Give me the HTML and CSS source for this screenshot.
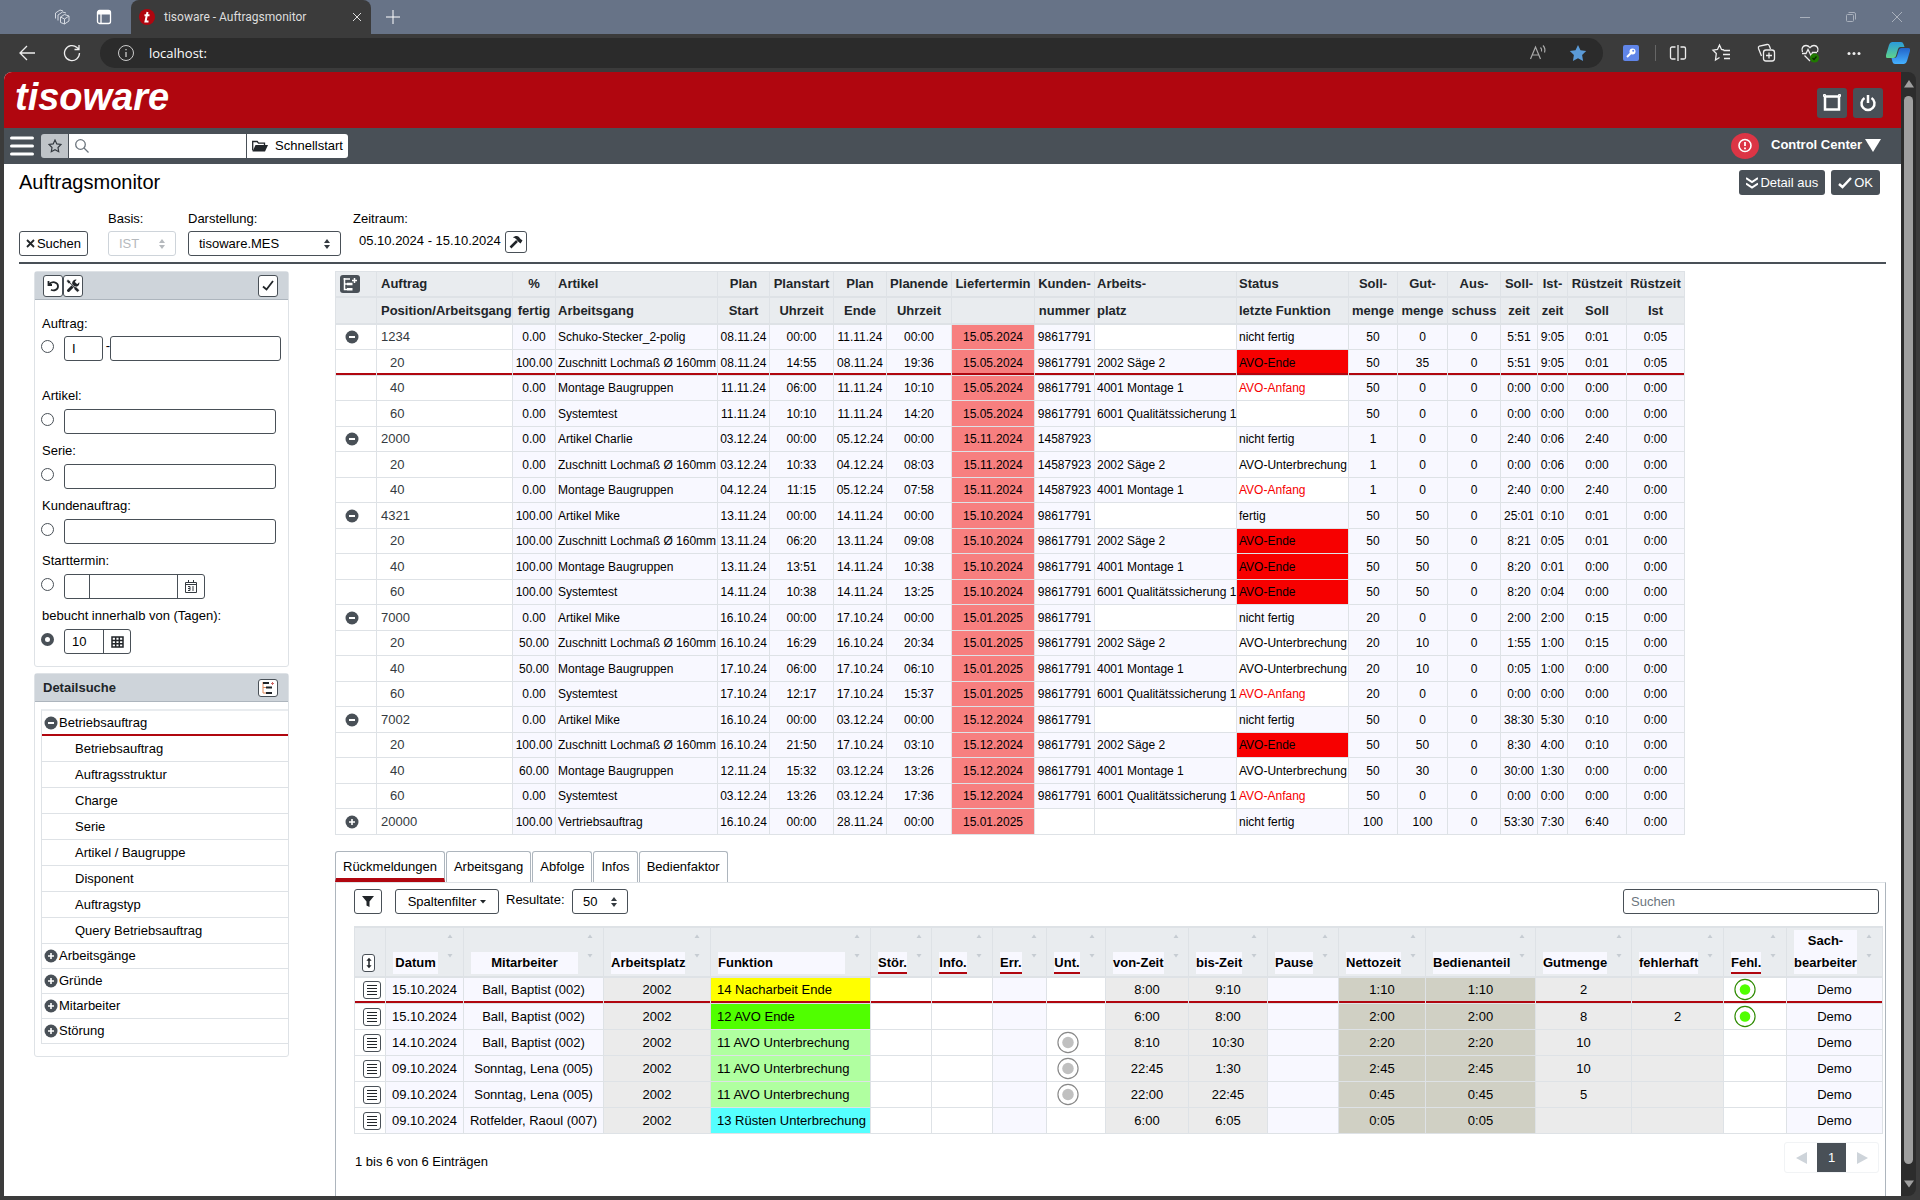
FILE: index.html
```html
<!DOCTYPE html>
<html lang="de">
<head>
<meta charset="utf-8">
<title>tisoware - Auftragsmonitor</title>
<link rel="stylesheet" href="styles.css">
</head>
<body>
<svg class="sprite" aria-hidden="true">
  <symbol id="minus" viewBox="0 0 14 14"><circle cx="7" cy="7" r="6.5" fill="#495057"/><path d="M4 7h6" stroke="#fff" stroke-width="2"/></symbol>
  <symbol id="plus" viewBox="0 0 14 14"><circle cx="7" cy="7" r="6.5" fill="#495057"/><path d="M4 7h6M7 4v6" stroke="#fff" stroke-width="1.6"/></symbol>
  <symbol id="updown" viewBox="0 0 8 12"><path d="M1 5l3-4 3 4zM1 7l3 4 3-4z" fill="currentColor"/></symbol>
  <symbol id="sort" viewBox="0 0 6 40"><path d="M.5 4L3 .5 5.500 4zM.5 20h5L3 23.500z" fill="#c6ccd2"/></symbol>
  <symbol id="list" viewBox="0 0 12 12"><path d="M1 1.500h10M1 4.500h10M1 7.500h10M1 10.500h10" stroke="#212529" stroke-width="1"/></symbol>
  <symbol id="lampgrey" viewBox="0 0 24 24"><circle cx="12" cy="12" r="10.5" fill="#fff" stroke="#888" stroke-width="1.2"/><circle cx="12" cy="12" r="6" fill="#c0c0c0"/></symbol>
  <symbol id="lampgreen" viewBox="0 0 24 24"><circle cx="12" cy="12" r="10.5" fill="#fff" stroke="#2e8b00" stroke-width="1.2"/><circle cx="12" cy="12" r="5.5" fill="#50ff00"/></symbol>
</svg>

<header class="tabstrip">
  <svg class="ti" viewBox="0 0 18 18" fill="none" stroke="#d5dae2"><path d="M7.500 9l4-2.500 4.500 1.500v5l-4.500 3-4-1.500zM11.500 11v5M7.500 9l4 2 4.500-3M5 12.500V7l4.500-3 3.500 1M2.500 10.500V5L7 2l3 1"/></svg>
  <svg class="ti" viewBox="0 0 18 18" fill="none" stroke="#fff" stroke-width="1.300"><rect x="2.500" y="2.500" width="13" height="13" rx="2"/><path d="M3 4.500h12" stroke-width="4"/><path d="M6 5v10"/></svg>
  <div class="tab">
    <svg width="16" height="16" viewBox="0 0 16 16"><circle cx="8" cy="8" r="8" fill="#b0060f"/><path d="M8.500 3L6.500 12.500h3M5.500 6.200h5" stroke="#fff" stroke-width="2" fill="none"/></svg>
    <span class="tab-title">tisoware - Auftragsmonitor</span>
    <svg width="12" height="12" viewBox="0 0 12 12" stroke="#ddd"><path d="M2 2l8 8M10 2l-8 8"/></svg>
  </div>
  <svg class="newtab" viewBox="0 0 14 14" stroke="#fff"><path d="M0 7h14M7 0v14"/></svg>
  <svg class="win first" viewBox="0 0 12 12" stroke="#a9b0bc" fill="none"><path d="M1 6.500h10"/></svg>
  <svg class="win" viewBox="0 0 12 12" stroke="#a9b0bc" fill="none"><rect x="1.500" y="3.500" width="7" height="7" rx="1"/><path d="M3.500 1.500h5.500a1.500 1.500 0 0 1 1.500 1.500v5.500"/></svg>
  <svg class="win" viewBox="0 0 12 12" stroke="#a9b0bc" fill="none"><path d="M1 1l10 10M11 1L1 11"/></svg>
</header>

<nav class="toolbar">
  <svg width="18" height="18" viewBox="0 0 18 18" fill="none" stroke="#eee" stroke-width="1.300"><path d="M17 9H2M9 2L2 9l7 7"/></svg>
  <svg class="reload" width="18" height="18" viewBox="0 0 18 18" fill="none" stroke="#eee" stroke-width="1.300"><path d="M16.500 9A7.500 7.500 0 1 1 14 3.500L16 5M16 1v4.500h-4.500"/></svg>
  <div class="address">
    <svg width="18" height="18" viewBox="0 0 18 18" fill="none" stroke="#ccc"><circle cx="9" cy="9" r="7.500"/><path d="M9 8v5M9 5v1.300" stroke-width="1.300"/></svg>
    <span class="url">localhost:</span>
    <svg width="18" height="18" viewBox="0 0 18 18" fill="none" stroke="#aaa" stroke-width="1.200"><path d="M1.500 15L6.500 3l5 12M3 11h7M11.500 3.500a4 4 0 0 1 1 4M14 1.500a7 7 0 0 1 1.500 7"/></svg>
    <svg class="star" width="18" height="18" viewBox="0 0 18 18" fill="#5b9bd8"><path d="M9 1l2.500 5.300 5.700.8-4.100 4 1 5.800L9 14.200 3.900 16.900l1-5.800-4.100-4 5.700-.8z"/></svg>
  </div>
  <svg class="key" width="16" height="16" viewBox="0 0 16 16"><rect width="16" height="16" rx="2" fill="#6085e8"/><circle cx="9.500" cy="6.500" r="3" fill="#fff"/><path d="M8 8l-4 4" stroke="#fff" stroke-width="2"/><circle cx="10.200" cy="5.800" r="1" fill="#6085e8"/></svg>
  <span class="divider"></span>
  <svg class="tb" viewBox="0 0 24 24" fill="none" stroke="#eee" stroke-width="1.300"><path d="M9.500 6H6a1.500 1.500 0 0 0-1.500 1.500v9A1.500 1.500 0 0 0 6 18h3.500M14.500 6H18a1.500 1.500 0 0 1 1.500 1.500v9A1.500 1.500 0 0 1 18 18h-3.500M12 4v16"/></svg>
  <svg class="tb" viewBox="0 0 24 24" fill="none" stroke="#eee" stroke-width="1.300"><path d="M14 9l-2.500-.5L9.500 4l-2 4.500-4.500.7 3.300 3.300-.8 6.500 4-2.500M13.500 9.500H20M13 13.500h7M14 17.500h6"/></svg>
  <svg class="tb" viewBox="0 0 24 24" fill="none" stroke="#eee" stroke-width="1.300"><rect x="9.500" y="9" width="11" height="11" rx="2.500"/><path d="M15 11.500v6M12 14.500h6M7.500 15l-3-7.500A2 2 0 0 1 5.500 5L13 3.500a2 2 0 0 1 2.300 1.300L16.500 8"/></svg>
  <svg class="tb" viewBox="0 0 24 24" fill="none" stroke="#eee" stroke-width="1.300"><path d="M4.500 11C3 7.500 5 4.500 8 4.500c2 0 3 1 4 2.200 1-1.200 2-2.200 4-2.200 3 0 5 3 3.500 6.500M4 12.500h4l2-4 3 6 1.500-3H19M6.500 14.500L12 20"/><circle cx="16.500" cy="17" r="4.500" fill="#1f7a00" stroke="none"/><path d="M14.500 17l1.500 1.500 2.500-3" stroke="#0b2b00"/></svg>
  <svg class="tb" viewBox="0 0 24 24" fill="#eee"><circle cx="7" cy="12.500" r="1.500"/><circle cx="12" cy="12.500" r="1.500"/><circle cx="17" cy="12.500" r="1.500"/></svg>
  <svg class="tb" viewBox="0 0 24 24">
    <defs><linearGradient id="c1" x1="0" y1="0" x2="0" y2="1"><stop offset="0" stop-color="#2a9bdc"/><stop offset="1" stop-color="#5fd38a"/></linearGradient><linearGradient id="c2" x1="0" y1="0" x2="0" y2="1"><stop offset="0" stop-color="#2263c9"/><stop offset="1" stop-color="#45b1ff"/></linearGradient></defs>
    <path d="M6 1h9a3 3 0 0 1 2.500 2l1 3h-4a3 3 0 0 0-2.500 2l-2 7a3 3 0 0 1-2.500 2H2a2 2 0 0 1-2-3L3 4a4 4 0 0 1 3-3z" fill="url(#c1)"/>
    <path d="M18 23H9a3 3 0 0 1-2.500-2l-1-4h3a3 3 0 0 0 2.500-2l2-6.500A3 3 0 0 1 15.500 7H22a2 2 0 0 1 2 3l-3 10a4 4 0 0 1-3 3z" fill="url(#c2)"/>
  </svg>
</nav>

<div class="viewport">
<div class="page">
  <div class="brand">
    <span class="logo">tisoware</span>
    <button class="sq" aria-label="Vollbild"><svg width="20" height="20" viewBox="0 0 20 20" fill="none" stroke="#fff"><path d="M3 3.500h14v13H3z" stroke-width="2.500"/><path d="M1.500 1.500h2v2h-2zM16.500 1.500h2v2h-2z" stroke-width="1"/></svg></button>
    <button class="sq" aria-label="Abmelden"><svg width="18" height="18" viewBox="0 0 18 18" fill="none" stroke="#fff" stroke-width="2.500"><path d="M5.500 4a6.500 6.500 0 1 0 7 0M9 1v8"/></svg></button>
  </div>

  <div class="menubar">
    <button class="burger" aria-label="Menü"><svg width="24" height="20" viewBox="0 0 24 20" stroke="#fff" stroke-width="3" stroke-linecap="round"><path d="M1.500 2h21M1.500 10h21M1.500 18h21"/></svg></button>
    <div class="quick">
      <button class="fav" aria-label="Favoriten"><svg width="14" height="14" viewBox="0 0 14 14" fill="none" stroke="#343a40" stroke-width="1.200"><path d="M7 1l1.800 3.900 4.200.6-3 3 .7 4.200L7 10.700l-3.700 2 .7-4.200-3-3 4.200-.6z"/></svg></button>
      <label class="seek"><svg width="14" height="14" viewBox="0 0 14 14" fill="none" stroke="#6c757d" stroke-width="1.300"><circle cx="5.500" cy="5.500" r="4.800"/><path d="M9 9l4.500 4.500"/></svg><input type="text" aria-label="Suche"></label>
      <button class="start"><svg width="16" height="12" viewBox="0 0 16 12"><path d="M.7 10.500V1.500h4.500l1.300 1.700h6V5" fill="none" stroke="#212529" stroke-width="1.300"/><path d="M3.500 5H16l-3 6.500H.5z" fill="#212529"/></svg>Schnellstart</button>
    </div>
    <button class="alert" aria-label="Hinweise"><svg width="28" height="26" viewBox="0 0 28 26"><ellipse cx="14" cy="13" rx="14" ry="13" fill="#dc3545"/><circle cx="14" cy="12.500" r="6" fill="none" stroke="#fff" stroke-width="1.600"/><path d="M14 9v4M14 14.500v1.700" stroke="#fff" stroke-width="1.800"/></svg></button>
    <button class="cc">Control Center <svg width="16" height="13" viewBox="0 0 16 13"><path d="M0 0h16L8 13z" fill="#fff"/></svg></button>
  </div>

  <div class="titlebar">
    <h1>Auftragsmonitor</h1>
    <button class="dark"><svg width="12" height="12" viewBox="0 0 12 12" fill="none" stroke="#fff" stroke-width="2"><path d="M0 1l6 4 6-4M0 6.500l6 4 6-4"/></svg>Detail aus</button>
    <button class="dark"><svg width="14" height="12" viewBox="0 0 14 12" fill="none" stroke="#fff" stroke-width="2.500"><path d="M1 7l3.500 3L13 1"/></svg>OK</button>
  </div>

  <div class="filters">
    <button class="btn search"><svg width="9" height="9" viewBox="0 0 9 9" stroke="#212529" stroke-width="1.800"><path d="M1 1l7 7M8 1L1 8"/></svg>Suchen</button>
    <div class="ff basis"><label for="basis">Basis:</label><span class="sel off"><select id="basis" disabled><option>IST</option></select><svg width="8" height="12"><use href="#updown"/></svg></span></div>
    <div class="ff darst"><label for="darst">Darstellung:</label><span class="sel"><select id="darst"><option>tisoware.MES</option></select><svg width="8" height="12"><use href="#updown"/></svg></span></div>
    <div class="ff"><span>Zeitraum:</span><span class="range">05.10.2024 - 15.10.2024 <button class="btn tool" aria-label="Zeitraum ändern"><svg width="14" height="14" viewBox="0 0 14 14"><path d="M1.500 12.500L8 6" stroke="#212529" stroke-width="2.500"/><path d="M4 2.500C6 .5 8.500.5 10 2l1 1.500 2.500 2-2 3-3-2.500C8 4.500 6.500 3 4 2.500z" fill="#212529"/></svg></button></span></div>
  </div>

  <div class="work">
    <aside class="side">
      <section class="card">
        <div class="card-head tools">
          <button class="btn mini" aria-label="Zurücksetzen"><svg width="12" height="12" viewBox="0 0 12 12" fill="none" stroke="#212529" stroke-width="1.800"><path d="M1.500 1v4H5M2 4.500c3-4 9-2.500 9 1.800 0 3.500-4 5-7 3.500"/></svg></button>
          <button class="btn mini" aria-label="Einstellungen"><svg width="14" height="14" viewBox="0 0 14 14"><path d="M2.500 11.500L9 5" stroke="#212529" stroke-width="3" stroke-linecap="round"/><path d="M13.200 3.200a3.600 3.600 0 1 1-2.500-2.500L9 2.500l.4 2.100 2.100.4z" fill="#212529"/><path d="M.5 2L2 .5l2.500 2v1.300L9 8l1-.3 3.500 3.500-2 2L8 10l.2-1L3.800 4.500H2.500z" fill="#212529" stroke="#fff" stroke-width=".5"/></svg></button>
          <button class="btn mini push" aria-label="Übernehmen"><svg width="12" height="12" viewBox="0 0 12 12" fill="none" stroke="#212529" stroke-width="1.800"><path d="M1 6.500l3.500 3L11 1"/></svg></button>
        </div>
        <form class="form">
          <div class="row first"><label for="r1">Auftrag:</label><div class="line"><input type="radio" name="k" id="r1"><input class="in w39" type="text" value="I" aria-label="Auftrag Typ"><span class="dash">-</span><input class="in w171" type="text" aria-label="Auftrag Nummer"></div></div>
          <div class="row"><label for="r2">Artikel:</label><div class="line"><input type="radio" name="k" id="r2"><input class="in wide" type="text" aria-label="Artikel"></div></div>
          <div class="row"><label for="r3">Serie:</label><div class="line"><input type="radio" name="k" id="r3"><input class="in wide" type="text" aria-label="Serie"></div></div>
          <div class="row"><label for="r4">Kundenauftrag:</label><div class="line"><input type="radio" name="k" id="r4"><input class="in wide" type="text" aria-label="Kundenauftrag"></div></div>
          <div class="row"><label for="r5">Starttermin:</label><div class="line"><input type="radio" name="k" id="r5"><span class="group"><input class="w26" type="text" aria-label="Operator"><input class="w88" type="text" aria-label="Datum"><button type="button" aria-label="Kalender"><svg width="12" height="13" viewBox="0 0 12 13" fill="none" stroke="#343a40"><path d="M.5 2.500h11v10H.5zM.5 4.500h11M3.500 0v3M8.500 0v3M3 6.500h2v4H3M3 8.500h2M8 6v5"/></svg></button></span></div></div>
          <div class="row"><label for="r6">bebucht innerhalb von (Tagen):</label><div class="line"><input type="radio" name="k" id="r6" checked><span class="group"><input class="w39" type="text" value="10" aria-label="Tage"><button type="button" aria-label="Auswahl"><svg width="13" height="12" viewBox="0 0 13 12" fill="none" stroke="#212529" stroke-width="1.500"><path d="M1 1h11v10H1zM1 4.500h11M1 7.700h11M4.700 1v10M8.300 1v10"/></svg></button></span></div></div>
        </form>
      </section>

      <section class="card">
        <div class="card-head">
          <h2>Detailsuche</h2>
          <button class="btn mini low push" aria-label="Baum umschalten"><svg width="14" height="14" viewBox="0 0 14 14" fill="none"><path d="M2 1v11h3M2 6.500h3" stroke="#e08a5a"/><path d="M2 2h6M5 6.500h6M5 12h6" stroke="#212529" stroke-width="2.200"/><path d="M11.500 1v3M10 2.500h3" stroke="#c66"/></svg></button>
        </div>
        <ul class="tree">
          <li class="top active"><svg><use href="#minus"/></svg>Betriebsauftrag</li>
          <li><a href="#">Betriebsauftrag</a></li>
          <li><a href="#">Auftragsstruktur</a></li>
          <li><a href="#">Charge</a></li>
          <li><a href="#">Serie</a></li>
          <li><a href="#">Artikel / Baugruppe</a></li>
          <li><a href="#">Disponent</a></li>
          <li><a href="#">Auftragstyp</a></li>
          <li><a href="#">Query Betriebsauftrag</a></li>
          <li class="top"><svg><use href="#plus"/></svg>Arbeitsgänge</li>
          <li class="top"><svg><use href="#plus"/></svg>Gründe</li>
          <li class="top"><svg><use href="#plus"/></svg>Mitarbeiter</li>
          <li class="top"><svg><use href="#plus"/></svg>Störung</li>
        </ul>
      </section>
    </aside>

    <main class="main">
      <table class="orders">
        <colgroup><col class="c41"><col class="c136"><col class="c43"><col class="c162"><col class="c52"><col class="c64"><col class="c53"><col class="c65"><col class="c83"><col class="c60"><col class="c142"><col class="c112"><col class="c49"><col class="c50"><col class="c53"><col class="c37"><col class="c30"><col class="c59"><col class="c58"></colgroup>
        <thead>
          <tr><th><button class="expand" aria-label="Alle auf- oder zuklappen"><svg width="16" height="14" viewBox="0 0 16 14" fill="none" stroke="#fff" stroke-width="1.500"><path d="M2.500 1v11.500H5M2.500 7H5M1.500 2h6.500"/><path d="M5 7h5.500M5 12.200h5.500" stroke-width="2.500"/><path d="M12.500 1v5M10 3.500h5"/></svg></button></th><th>Auftrag</th><th>%</th><th>Artikel</th><th>Plan</th><th>Planstart</th><th>Plan</th><th>Planende</th><th>Liefertermin</th><th>Kunden-</th><th>Arbeits-</th><th>Status</th><th>Soll-</th><th>Gut-</th><th>Aus-</th><th>Soll-</th><th>Ist-</th><th>Rüstzeit</th><th>Rüstzeit</th></tr>
          <tr><th></th><th>Position/Arbeitsgang</th><th>fertig</th><th>Arbeitsgang</th><th>Start</th><th>Uhrzeit</th><th>Ende</th><th>Uhrzeit</th><th></th><th>nummer</th><th>platz</th><th>letzte Funktion</th><th>menge</th><th>menge</th><th>schuss</th><th>zeit</th><th>zeit</th><th>Soll</th><th>Ist</th></tr>
        </thead>
        <tbody>
          <tr class="o"><td><svg><use href="#minus"/></svg></td><td>1234</td><td>0.00</td><td>Schuko-Stecker_2-polig</td><td>08.11.24</td><td>00:00</td><td>11.11.24</td><td>00:00</td><td>15.05.2024</td><td>98617791</td><td></td><td>nicht fertig</td><td>50</td><td>0</td><td>0</td><td>5:51</td><td>9:05</td><td>0:01</td><td>0:05</td></tr>
          <tr class="sel-row"><td></td><td>20</td><td>100.00</td><td>Zuschnitt Lochmaß Ø 160mm</td><td>08.11.24</td><td>14:55</td><td>08.11.24</td><td>19:36</td><td>15.05.2024</td><td>98617791</td><td>2002 Säge 2</td><td class="e">AVO-Ende</td><td>50</td><td>35</td><td>0</td><td>5:51</td><td>9:05</td><td>0:01</td><td>0:05</td></tr>
          <tr><td></td><td>40</td><td>0.00</td><td>Montage Baugruppen</td><td>11.11.24</td><td>06:00</td><td>11.11.24</td><td>10:10</td><td>15.05.2024</td><td>98617791</td><td>4001 Montage 1</td><td class="a">AVO-Anfang</td><td>50</td><td>0</td><td>0</td><td>0:00</td><td>0:00</td><td>0:00</td><td>0:00</td></tr>
          <tr><td></td><td>60</td><td>0.00</td><td>Systemtest</td><td>11.11.24</td><td>10:10</td><td>11.11.24</td><td>14:20</td><td>15.05.2024</td><td>98617791</td><td>6001 Qualitätssicherung 1</td><td></td><td>50</td><td>0</td><td>0</td><td>0:00</td><td>0:00</td><td>0:00</td><td>0:00</td></tr>
          <tr class="o"><td><svg><use href="#minus"/></svg></td><td>2000</td><td>0.00</td><td>Artikel Charlie</td><td>03.12.24</td><td>00:00</td><td>05.12.24</td><td>00:00</td><td>15.11.2024</td><td>14587923</td><td></td><td>nicht fertig</td><td>1</td><td>0</td><td>0</td><td>2:40</td><td>0:06</td><td>2:40</td><td>0:00</td></tr>
          <tr><td></td><td>20</td><td>0.00</td><td>Zuschnitt Lochmaß Ø 160mm</td><td>03.12.24</td><td>10:33</td><td>04.12.24</td><td>08:03</td><td>15.11.2024</td><td>14587923</td><td>2002 Säge 2</td><td>AVO-Unterbrechung</td><td>1</td><td>0</td><td>0</td><td>0:00</td><td>0:06</td><td>0:00</td><td>0:00</td></tr>
          <tr><td></td><td>40</td><td>0.00</td><td>Montage Baugruppen</td><td>04.12.24</td><td>11:15</td><td>05.12.24</td><td>07:58</td><td>15.11.2024</td><td>14587923</td><td>4001 Montage 1</td><td class="a">AVO-Anfang</td><td>1</td><td>0</td><td>0</td><td>2:40</td><td>0:00</td><td>2:40</td><td>0:00</td></tr>
          <tr class="o"><td><svg><use href="#minus"/></svg></td><td>4321</td><td>100.00</td><td>Artikel Mike</td><td>13.11.24</td><td>00:00</td><td>14.11.24</td><td>00:00</td><td>15.10.2024</td><td>98617791</td><td></td><td>fertig</td><td>50</td><td>50</td><td>0</td><td>25:01</td><td>0:10</td><td>0:01</td><td>0:00</td></tr>
          <tr><td></td><td>20</td><td>100.00</td><td>Zuschnitt Lochmaß Ø 160mm</td><td>13.11.24</td><td>06:20</td><td>13.11.24</td><td>09:08</td><td>15.10.2024</td><td>98617791</td><td>2002 Säge 2</td><td class="e">AVO-Ende</td><td>50</td><td>50</td><td>0</td><td>8:21</td><td>0:05</td><td>0:01</td><td>0:00</td></tr>
          <tr><td></td><td>40</td><td>100.00</td><td>Montage Baugruppen</td><td>13.11.24</td><td>13:51</td><td>14.11.24</td><td>10:38</td><td>15.10.2024</td><td>98617791</td><td>4001 Montage 1</td><td class="e">AVO-Ende</td><td>50</td><td>50</td><td>0</td><td>8:20</td><td>0:01</td><td>0:00</td><td>0:00</td></tr>
          <tr><td></td><td>60</td><td>100.00</td><td>Systemtest</td><td>14.11.24</td><td>10:38</td><td>14.11.24</td><td>13:25</td><td>15.10.2024</td><td>98617791</td><td>6001 Qualitätssicherung 1</td><td class="e">AVO-Ende</td><td>50</td><td>50</td><td>0</td><td>8:20</td><td>0:04</td><td>0:00</td><td>0:00</td></tr>
          <tr class="o"><td><svg><use href="#minus"/></svg></td><td>7000</td><td>0.00</td><td>Artikel Mike</td><td>16.10.24</td><td>00:00</td><td>17.10.24</td><td>00:00</td><td>15.01.2025</td><td>98617791</td><td></td><td>nicht fertig</td><td>20</td><td>0</td><td>0</td><td>2:00</td><td>2:00</td><td>0:15</td><td>0:00</td></tr>
          <tr><td></td><td>20</td><td>50.00</td><td>Zuschnitt Lochmaß Ø 160mm</td><td>16.10.24</td><td>16:29</td><td>16.10.24</td><td>20:34</td><td>15.01.2025</td><td>98617791</td><td>2002 Säge 2</td><td>AVO-Unterbrechung</td><td>20</td><td>10</td><td>0</td><td>1:55</td><td>1:00</td><td>0:15</td><td>0:00</td></tr>
          <tr><td></td><td>40</td><td>50.00</td><td>Montage Baugruppen</td><td>17.10.24</td><td>06:00</td><td>17.10.24</td><td>06:10</td><td>15.01.2025</td><td>98617791</td><td>4001 Montage 1</td><td>AVO-Unterbrechung</td><td>20</td><td>10</td><td>0</td><td>0:05</td><td>1:00</td><td>0:00</td><td>0:00</td></tr>
          <tr><td></td><td>60</td><td>0.00</td><td>Systemtest</td><td>17.10.24</td><td>12:17</td><td>17.10.24</td><td>15:37</td><td>15.01.2025</td><td>98617791</td><td>6001 Qualitätssicherung 1</td><td class="a">AVO-Anfang</td><td>20</td><td>0</td><td>0</td><td>0:00</td><td>0:00</td><td>0:00</td><td>0:00</td></tr>
          <tr class="o"><td><svg><use href="#minus"/></svg></td><td>7002</td><td>0.00</td><td>Artikel Mike</td><td>16.10.24</td><td>00:00</td><td>03.12.24</td><td>00:00</td><td>15.12.2024</td><td>98617791</td><td></td><td>nicht fertig</td><td>50</td><td>0</td><td>0</td><td>38:30</td><td>5:30</td><td>0:10</td><td>0:00</td></tr>
          <tr><td></td><td>20</td><td>100.00</td><td>Zuschnitt Lochmaß Ø 160mm</td><td>16.10.24</td><td>21:50</td><td>17.10.24</td><td>03:10</td><td>15.12.2024</td><td>98617791</td><td>2002 Säge 2</td><td class="e">AVO-Ende</td><td>50</td><td>50</td><td>0</td><td>8:30</td><td>4:00</td><td>0:10</td><td>0:00</td></tr>
          <tr><td></td><td>40</td><td>60.00</td><td>Montage Baugruppen</td><td>12.11.24</td><td>15:32</td><td>03.12.24</td><td>13:26</td><td>15.12.2024</td><td>98617791</td><td>4001 Montage 1</td><td>AVO-Unterbrechung</td><td>50</td><td>30</td><td>0</td><td>30:00</td><td>1:30</td><td>0:00</td><td>0:00</td></tr>
          <tr><td></td><td>60</td><td>0.00</td><td>Systemtest</td><td>03.12.24</td><td>13:26</td><td>03.12.24</td><td>17:36</td><td>15.12.2024</td><td>98617791</td><td>6001 Qualitätssicherung 1</td><td class="a">AVO-Anfang</td><td>50</td><td>0</td><td>0</td><td>0:00</td><td>0:00</td><td>0:00</td><td>0:00</td></tr>
          <tr class="o"><td><svg><use href="#plus"/></svg></td><td>20000</td><td>100.00</td><td>Vertriebsauftrag</td><td>16.10.24</td><td>00:00</td><td>28.11.24</td><td>00:00</td><td>15.01.2025</td><td></td><td></td><td>nicht fertig</td><td>100</td><td>100</td><td>0</td><td>53:30</td><td>7:30</td><td>6:40</td><td>0:00</td></tr>
        </tbody>
      </table>

      <div class="tabs">
        <button class="on">Rückmeldungen</button><button>Arbeitsgang</button><button>Abfolge</button><button>Infos</button><button>Bedienfaktor</button>
      </div>

      <section class="panel">
        <div class="bar">
          <button class="btn funnel" aria-label="Filter"><svg width="12" height="11" viewBox="0 0 12 11"><path d="M0 0h12L7.500 5.500V11l-3-1.500v-4z" fill="#212529"/></svg></button>
          <button class="btn cols">Spaltenfilter <svg width="6" height="4" viewBox="0 0 6 4"><path d="M0 0h6L3 3.500z" fill="#212529"/></svg></button>
          <label for="n">Resultate:</label>
          <span class="sel count"><select id="n"><option>50</option></select><svg width="8" height="12"><use href="#updown"/></svg></span>
          <input class="in find" type="text" placeholder="Suchen" aria-label="Suchen">
        </div>

        <table class="log">
          <colgroup><col class="c31"><col class="c78"><col class="c140"><col class="c107"><col class="c160"><col class="c61"><col class="c61"><col class="c54"><col class="c59"><col class="c83"><col class="c79"><col class="c71"><col class="c87"><col class="c110"><col class="c96"><col class="c92"><col class="c63"><col class="c96"></colgroup>
          <thead>
            <tr>
              <th><div class="h"><button class="btn tiny" aria-label="Zeilen aufklappen"><svg width="8" height="14" viewBox="0 0 8 14"><path d="M4 0l3.500 4h-2.500v6h2.500L4 14 .5 10H3V4H.5z" fill="#212529"/></svg></button></div></th>
              <th><div class="h"><span>Datum</span><svg><use href="#sort"/></svg></div></th>
              <th><div class="h"><span>Mitarbeiter</span><svg><use href="#sort"/></svg></div></th>
              <th><div class="h"><span>Arbeitsplatz</span><svg><use href="#sort"/></svg></div></th>
              <th><div class="h left"><span>Funktion</span><svg><use href="#sort"/></svg></div></th>
              <th><div class="h"><span><a href="#">Stör.</a></span><svg><use href="#sort"/></svg></div></th>
              <th><div class="h"><span><a href="#">Info.</a></span><svg><use href="#sort"/></svg></div></th>
              <th><div class="h"><span><a href="#">Err.</a></span><svg><use href="#sort"/></svg></div></th>
              <th><div class="h"><span><a href="#">Unt.</a></span><svg><use href="#sort"/></svg></div></th>
              <th><div class="h"><span>von-Zeit</span><svg><use href="#sort"/></svg></div></th>
              <th><div class="h"><span>bis-Zeit</span><svg><use href="#sort"/></svg></div></th>
              <th><div class="h"><span>Pause</span><svg><use href="#sort"/></svg></div></th>
              <th><div class="h"><span>Nettozeit</span><svg><use href="#sort"/></svg></div></th>
              <th><div class="h"><span>Bedienanteil</span><svg><use href="#sort"/></svg></div></th>
              <th><div class="h"><span>Gutmenge</span><svg><use href="#sort"/></svg></div></th>
              <th><div class="h"><span>fehlerhaft</span><svg><use href="#sort"/></svg></div></th>
              <th><div class="h"><span><a href="#">Fehl.</a></span><svg><use href="#sort"/></svg></div></th>
              <th><div class="h"><span>Sach-<br>bearbeiter</span><svg><use href="#sort"/></svg></div></th>
            </tr>
          </thead>
          <tbody>
            <tr class="sel-row"><td><button class="btn item" aria-label="Details"><svg><use href="#list"/></svg></button></td><td>15.10.2024</td><td>Ball, Baptist (002)</td><td>2002</td><td class="f14">14 Nacharbeit Ende</td><td></td><td></td><td></td><td></td><td>8:00</td><td>9:10</td><td></td><td>1:10</td><td>1:10</td><td>2</td><td></td><td><svg><use href="#lampgreen"/></svg></td><td>Demo</td></tr>
            <tr><td><button class="btn item" aria-label="Details"><svg><use href="#list"/></svg></button></td><td>15.10.2024</td><td>Ball, Baptist (002)</td><td>2002</td><td class="f12">12 AVO Ende</td><td></td><td></td><td></td><td></td><td>6:00</td><td>8:00</td><td></td><td>2:00</td><td>2:00</td><td>8</td><td>2</td><td><svg><use href="#lampgreen"/></svg></td><td>Demo</td></tr>
            <tr><td><button class="btn item" aria-label="Details"><svg><use href="#list"/></svg></button></td><td>14.10.2024</td><td>Ball, Baptist (002)</td><td>2002</td><td class="f11">11 AVO Unterbrechung</td><td></td><td></td><td></td><td><svg><use href="#lampgrey"/></svg></td><td>8:10</td><td>10:30</td><td></td><td>2:20</td><td>2:20</td><td>10</td><td></td><td></td><td>Demo</td></tr>
            <tr><td><button class="btn item" aria-label="Details"><svg><use href="#list"/></svg></button></td><td>09.10.2024</td><td>Sonntag, Lena (005)</td><td>2002</td><td class="f11">11 AVO Unterbrechung</td><td></td><td></td><td></td><td><svg><use href="#lampgrey"/></svg></td><td>22:45</td><td>1:30</td><td></td><td>2:45</td><td>2:45</td><td>10</td><td></td><td></td><td>Demo</td></tr>
            <tr><td><button class="btn item" aria-label="Details"><svg><use href="#list"/></svg></button></td><td>09.10.2024</td><td>Sonntag, Lena (005)</td><td>2002</td><td class="f11">11 AVO Unterbrechung</td><td></td><td></td><td></td><td><svg><use href="#lampgrey"/></svg></td><td>22:00</td><td>22:45</td><td></td><td>0:45</td><td>0:45</td><td>5</td><td></td><td></td><td>Demo</td></tr>
            <tr><td><button class="btn item" aria-label="Details"><svg><use href="#list"/></svg></button></td><td>09.10.2024</td><td>Rotfelder, Raoul (007)</td><td>2002</td><td class="f13">13 Rüsten Unterbrechung</td><td></td><td></td><td></td><td></td><td>6:00</td><td>6:05</td><td></td><td>0:05</td><td>0:05</td><td></td><td></td><td></td><td>Demo</td></tr>
          </tbody>
        </table>

        <div class="foot">
          <span>1 bis 6 von 6 Einträgen</span>
          <div class="pager"><button aria-label="Zurück"><svg width="11" height="12" viewBox="0 0 11 12"><path d="M11 0v12L0 6z" fill="#ced4da"/></svg></button><button class="cur">1</button><button aria-label="Weiter"><svg width="11" height="12" viewBox="0 0 11 12"><path d="M0 0v12l11-6z" fill="#ced4da"/></svg></button></div>
        </div>
      </section>
    </main>
  </div>
</div>
<div class="scroll"><svg width="10" height="8" viewBox="0 0 10 8"><path d="M5 0l5 7.500H0z" fill="#9f9f9f"/></svg><span class="thumb"></span><svg width="10" height="8" viewBox="0 0 10 8"><path d="M5 7.500L0 .5h10z" fill="#9f9f9f"/></svg></div>
</div>
</body>
</html>
```
FILE: styles.css
```css
* { box-sizing: border-box; }
body {
  margin: 0;
  height: 100vh;
  display: flex;
  flex-direction: column;
  overflow: hidden;
  background: #3b3b3b;
  color: #000;
  font: 13px/20px "Liberation Sans", Arial, sans-serif;
}
button, input, select { font: inherit; color: inherit; margin: 0; padding: 0; }
button { display: inline-flex; align-items: center; justify-content: center; border: 0; background: none; white-space: nowrap; }
svg { flex: none; display: block; }
.sprite { display: none; }

/* browser frame */
.tabstrip { display: flex; align-items: center; height: 34px; background: #677387; padding: 0 17px 0 53px; }
.ti { width: 18px; height: 18px; margin-right: 24px; }
.ti + .ti { margin-right: 18px; }
.tab {
  display: flex; align-items: center; align-self: stretch; width: 240px; padding: 0 8px;
  background: #3b3b3b; border-radius: 8px 8px 0 0; color: #ddd; font: 12px/16px Roboto, sans-serif;
}
.tab-title { flex: 1; margin-left: 9px; white-space: nowrap; }
.newtab { width: 14px; height: 14px; margin-left: 15px; }
.win { width: 12px; height: 12px; margin-left: 34px; }
.win.first { margin-left: auto; }
.toolbar { display: flex; align-items: center; height: 38px; padding: 0 10px 0 18px; }
.reload { margin-left: 27px; }
.address {
  flex: 1; display: flex; align-items: center; height: 30px; margin: 0 20px 0 19px; padding: 0 16px 0 17px;
  border-radius: 15px; background: #2b2b2b;
}
.url { flex: 1; margin-left: 14px; color: #fff; font: 13px/18px "Open Sans", sans-serif; }
.star { margin-left: 22px; }
.divider { width: 1px; height: 16px; margin: 0 10px 0 16px; background: #666; }
.tb { width: 24px; height: 24px; margin-right: 20px; }
.tb:last-child { margin-right: 0; }
.viewport { flex: 1; min-height: 0; display: flex; padding: 0 4px 4px; }
.scroll {
  width: 15px; display: flex; flex-direction: column; align-items: center; gap: 8px; padding: 8px 0;
  background: #2c2c2c; border-radius: 0 8px 8px 0;
}
.thumb { flex: 1; width: 9px; margin-bottom: 8px; border-radius: 5px; background: #9f9f9f; }

/* application header */
.page { flex: 1; min-width: 0; display: flex; flex-direction: column; overflow: hidden; background: #fff; border-radius: 8px 0 0 0; }
.brand { flex: none; display: flex; align-items: center; gap: 6px; height: 56px; padding: 5px 18px 0 11px; background: #b0060f; }
.logo { flex: 1; color: #fff; font: italic bold 38px/44px "Liberation Sans", Arial, sans-serif; margin-top: -12px; }
.sq { width: 30px; height: 30px; border-radius: 3px; background: #495057; }
.menubar { flex: none; display: flex; align-items: center; height: 36px; padding: 0 20px 0 6px; background: #495057; }
.quick { display: flex; height: 24px; margin-left: 7px; border-radius: 3px; overflow: hidden; }
.fav { width: 28px; background: #bfc4c8; border-right: 1px solid #495057; }
.seek { display: flex; align-items: center; width: 177px; padding-left: 6px; background: #fff; }
.seek input { flex: 1; min-width: 0; border: 0; outline: 0; }
.start { gap: 7px; width: 102px; border-left: 1px solid #495057; background: #fff; }
.alert { margin-left: auto; }
.cc { gap: 3px; margin-left: 12px; padding-bottom: 2px; color: #fff; font-weight: bold; }

.titlebar { flex: none; display: flex; align-items: center; gap: 6px; height: 37px; padding: 0 21px 0 15px; }
h1 { flex: 1; margin: 0; padding-bottom: 2px; font-size: 20px; font-weight: normal; line-height: 24px; }
.dark { height: 25px; gap: 2px; padding: 0 7px; border-radius: 3px; background: #495057; color: #fff; }

.filters { flex: none; display: flex; align-items: flex-end; height: 63px; margin: 0 15px; padding-bottom: 6px; border-bottom: 2px solid #495057; }
.btn { height: 25px; border: 1px solid #495057; border-radius: 3px; background: #fff; }
.search { gap: 2px; width: 69px; }
.ff { display: flex; flex-direction: column; gap: 2px; margin-left: 12px; }
.basis { width: 68px; margin-left: 20px; }
.darst { width: 153px; }
.sel { display: grid; align-items: center; height: 25px; }
.sel select { grid-area: 1 / 1; width: 100%; height: 25px; padding: 0 10px; border: 1px solid #495057; border-radius: 3px; background: #fff; appearance: none; opacity: 1; }
.sel svg { grid-area: 1 / 1; justify-self: end; margin-right: 10px; pointer-events: none; color: #343a40; }
.sel.off select { color: #b5b9bd; border-color: #ced4da; }
.sel.off svg { color: #b5b9bd; }
.range { display: flex; gap: 4px; height: 25px; margin-left: 6px; }
.tool { width: 22px; height: 22px; }

/* side column */
.work { flex: 1; min-height: 0; display: flex; gap: 46px; padding: 7px 15px 0 30px; }
.side { width: 255px; display: flex; flex-direction: column; gap: 6px; flex: none; }
.card { border: 1px solid #dee2e6; border-radius: 3px; }
.card-head { display: flex; align-items: center; height: 28px; padding: 0 10px 0 8px; background: #ced4da; border-bottom: 1px solid #adb5bd; }
h2 { margin: 0; color: #212529; font-size: 13px; line-height: 20px; }
.mini { width: 20px; height: 22px; }
.low { height: 18px; }
.push { margin-left: auto; }
.form { padding: 14px 7px 12px 6px; display: flex; flex-direction: column; gap: 7px; }
.row { display: flex; flex-direction: column; gap: 3px; }
.row.first { gap: 2px; margin-bottom: 18px; }
.row label { margin-left: 1px; }
.line { display: flex; height: 25px; }
.line input[type="radio"] { appearance: none; flex: none; width: 13px; height: 13px; margin: 4px 10px 0 0; border: 1px solid #495057; border-radius: 50%; background: #fff; }
.line input[type="radio"]:checked { border-width: 4px; }
.in { height: 25px; padding: 0 7px; border: 1px solid #495057; border-radius: 3px; background: #fff; }
.w39 { width: 39px; }
.w171 { width: 171px; }
.wide { width: 212px; }
.w26 { width: 25px; }
.w88 { width: 88px; }
.dash { width: 7px; text-align: right; }
.group { display: flex; height: 25px; border: 1px solid #495057; border-radius: 3px; }
.group input { border: 0; border-right: 1px solid #495057; padding-left: 7px; background: none; }
.group button { width: 26px; }
.tree { list-style: none; margin: 7px 0 12px 6px; padding: 0; border: 1px solid #dee2e6; border-width: 2px 0 0 1px; border-top-color: #e9ecef; }
.tree li { display: flex; align-items: center; height: 26px; padding-left: 33px; border-bottom: 1px solid #dee2e6; }
.tree a { color: inherit; text-decoration: none; }
.tree .top { height: 25px; gap: 1px; padding-left: 2px; }
.tree svg { width: 14px; height: 14px; }
.tree .active { border-bottom: 2px solid #b0060f; }

/* tables */
.main { flex: 1; min-width: 0; display: flex; flex-direction: column; }
table { table-layout: fixed; border-collapse: separate; border-spacing: 0; border-left: 1px solid #dee2e6; }
th, td { border: solid #dee2e6; border-width: 0 1px 1px 0; white-space: nowrap; }
.c30 { width: 30px; } .c31 { width: 31px; } .c37 { width: 37px; } .c41 { width: 41px; } .c43 { width: 43px; }
.c49 { width: 49px; } .c50 { width: 50px; } .c52 { width: 52px; } .c53 { width: 53px; } .c54 { width: 54px; }
.c58 { width: 58px; } .c59 { width: 59px; } .c60 { width: 60px; } .c61 { width: 61px; } .c63 { width: 63px; }
.c64 { width: 64px; } .c65 { width: 65px; } .c71 { width: 71px; } .c78 { width: 78px; } .c79 { width: 79px; }
.c83 { width: 83px; } .c87 { width: 87px; } .c92 { width: 92px; } .c96 { width: 96px; } .c107 { width: 107px; }
.c110 { width: 110px; } .c112 { width: 112px; } .c136 { width: 136px; } .c140 { width: 140px; } .c142 { width: 142px; }
.c160 { width: 160px; } .c162 { width: 162px; }
.sel-row td { box-shadow: inset 0 -2px #b0060f; }

.orders { width: 1350px; border-top: 1px solid #dee2e6; text-align: center; }
.orders th { height: 26px; padding: 0 1px; border-bottom-width: 2px; background: #e9ecef; color: #212529; line-height: 20px; }
.orders thead tr + tr th { height: 27px; }
.orders td { height: 25px; padding: 0 1px; background: #f8f8ff; font-size: 12px; line-height: 20px; }
.orders tbody tr:nth-child(even) td { height: 26px; }
.orders th:nth-child(2), .orders td:nth-child(2),
.orders th:nth-child(4), .orders td:nth-child(4),
.orders th:nth-child(11), .orders td:nth-child(11),
.orders th:nth-child(12), .orders td:nth-child(12) { text-align: left; padding: 0 0 0 2px; }
.orders td:nth-child(1) { background: #fff; }
.orders td:nth-child(2) { background: #fff; color: #343a40; font-size: 13px; padding-left: 13px; }
.orders th:nth-child(2), .orders .o td:nth-child(2) { padding-left: 4px; }
.orders td:nth-child(9) { background: #f77f7f; }
.orders td:nth-child(12) { background: #fff; }
.orders .o td:nth-child(12) { background: #f8f8ff; }
.orders td:empty { background: #fff; }
.orders td.e { background: #f70000; }
.orders td.a { color: #f70000; }
.orders td svg { width: 14px; height: 14px; margin-left: 8px; }
.orders .expand { display: flex; width: 20px; height: 18px; margin-left: 3px; border-radius: 3px; background: #495057; }

.tabs { display: flex; gap: 1px; margin-top: 16px; }
.tabs button { height: 31px; padding: 0 7px; border: 1px solid #adb5bd; border-bottom: 0; border-radius: 3px 3px 0 0; background: #fff; }
.tabs .on { border-bottom: 4px solid #b0060f; padding-top: 3px; }
.panel { flex: 1; border: 1px solid #adb5bd; border-top-color: #dee2e6; border-bottom: 0; padding: 6px 2px 0 18px; }
.bar { display: flex; margin-right: 4px; }
.funnel { width: 28px; }
.cols { width: 104px; margin: 0 7px 0 13px; gap: 4px; }
.bar label { line-height: 22px; width: 66px; }
.count { width: 56px; }
.find { width: 256px; margin-left: auto; }
.find::placeholder { color: #6c757d; opacity: 1; }

.log { width: 100%; margin-top: 12px; border-top: 2px solid #dee2e6; text-align: center; }
.log th { height: 50px; padding: 0; border-bottom-width: 2px; background: #e9ecef; vertical-align: bottom; }
.h { display: flex; align-items: flex-end; gap: 9px; padding: 0 10px 2px 7px; }
.h span { flex: 1; background: #f8f8ff; line-height: 22px; }
.h.left { text-align: left; }
.h svg { width: 6px; height: 40px; }
.h a { display: inline-block; color: inherit; text-decoration: none; line-height: 18px; border-bottom: 2px solid #b0060f; }
.tiny { width: 14px; height: 18px; margin-bottom: 2px; }
.log td { height: 26px; padding: 0 1px; line-height: 20px; background: #fff; }
.log .sel-row td { padding-bottom: 2px; }
.log td:nth-child(2), .log td:nth-child(3), .log td:nth-child(8), .log td:nth-child(12), .log td:nth-child(18) { background: #f8f8ff; }
.log td:nth-child(4), .log td:nth-child(10), .log td:nth-child(11), .log td:nth-child(15), .log td:nth-child(16) { background: #ebebeb; }
.log td:nth-child(13), .log td:nth-child(14) { background: #d0d0c4; }
.log td:nth-child(5) { text-align: left; padding-left: 6px; }
.log .f14 { background: #ff0; }
.log .f12 { background: #50ff00; }
.log .f11 { background: #b0ffa0; }
.log .f13 { background: #55ffff; }
.log td > svg { width: 24px; height: 23px; margin-left: 8px; }
.item { display: flex; width: 18px; height: 18px; margin-left: 7px; }
.item svg { width: 12px; height: 12px; }

.foot { display: flex; align-items: center; justify-content: space-between; margin: 8px 4px 0 1px; }
.foot > span { padding-top: 9px; }
.pager { display: flex; height: 31px; border: 1px solid #f1f3f5; border-radius: 3px; }
.pager button { width: 32px; height: 29px; }
.pager .cur { width: 29px; background: #495057; color: #fff; }
```
